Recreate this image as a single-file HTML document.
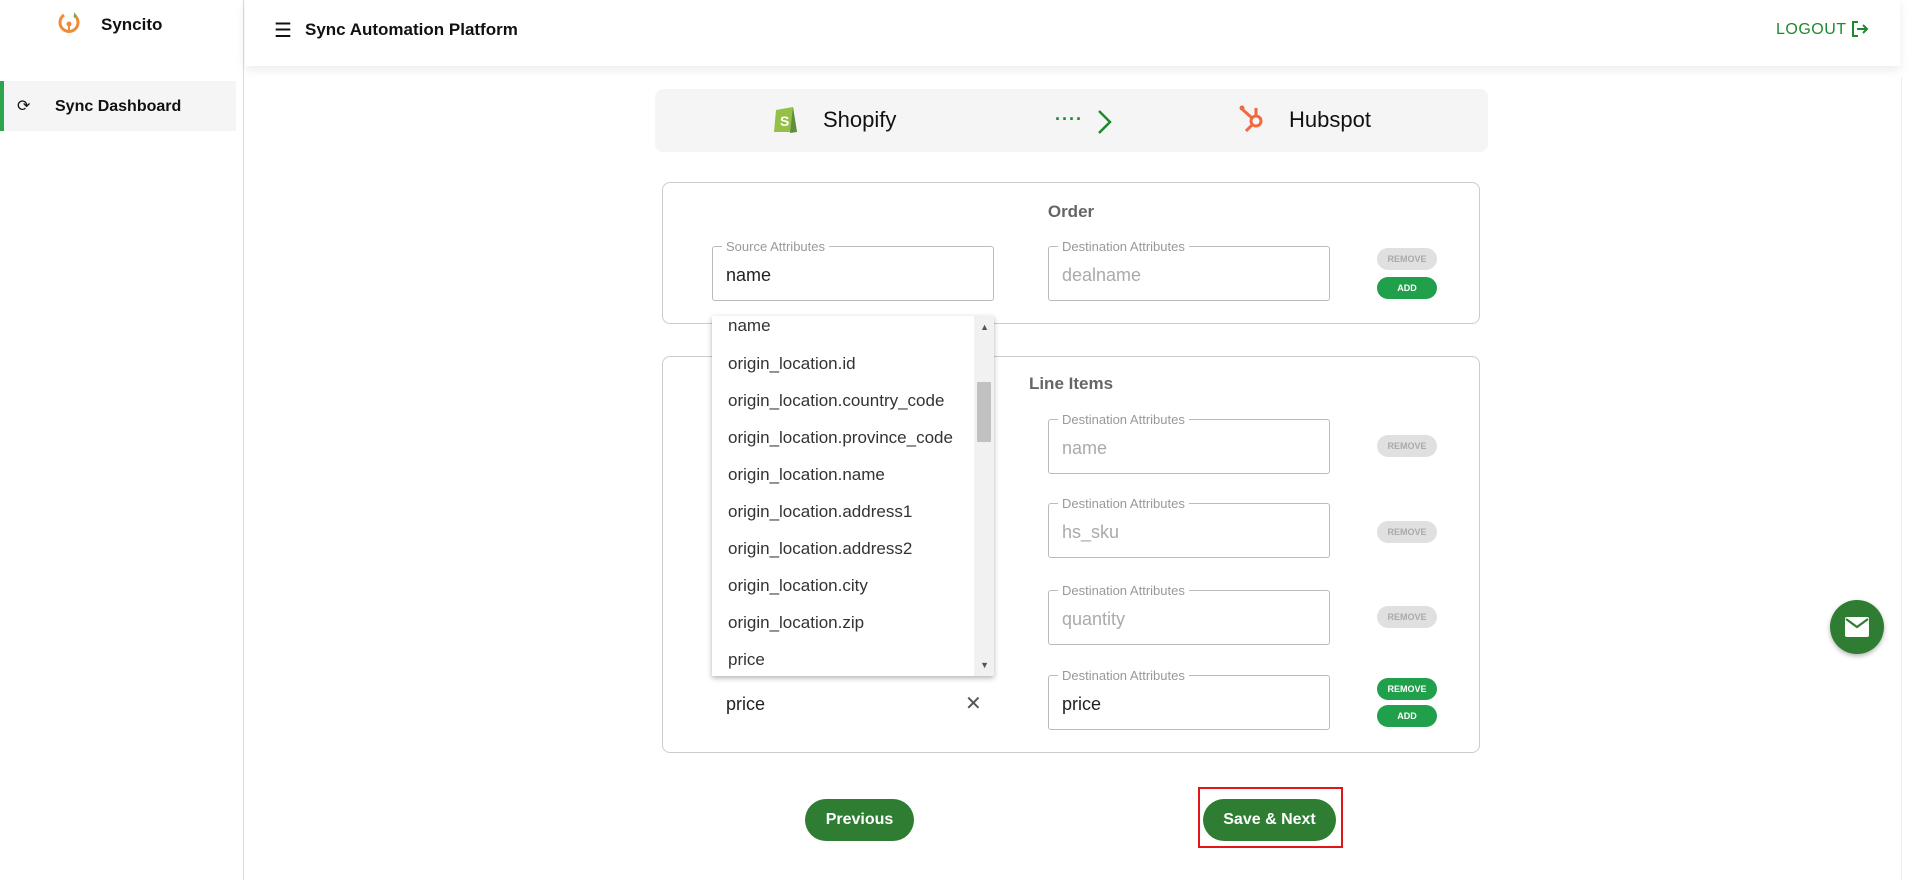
<!DOCTYPE html>
<html><head><meta charset="utf-8"><style>
*{box-sizing:border-box;margin:0;padding:0}
body{width:1916px;height:880px;overflow:hidden;background:#fff;font-family:"Liberation Sans",sans-serif;position:relative;color:#111}
.abs{position:absolute}
.side{left:0;top:0;width:244px;height:880px;border-right:1px solid #ddd;background:#fff}
.hdr{left:245px;top:0;width:1655px;height:66px;background:#fff;box-shadow:0 4px 10px rgba(0,0,0,.08)}
.banner{left:655px;top:89px;width:833px;height:63px;background:#f5f5f5;border-radius:8px}
.card{border:1px solid #ccc;border-radius:8px;left:662px;width:818px}
.ttl{font-size:17px;font-weight:bold;color:#666;width:100%;text-align:center}
.fld{border:1px solid #bbb;border-radius:3px;height:55px;width:282px}
.fld .lb{position:absolute;top:-8px;left:9px;background:#fff;padding:0 4px;font-size:13px;color:#999}
.fld .v{position:absolute;left:13px;top:18px;font-size:18px;color:#aaa}
.fld .v.d{color:#222}
.pill{width:60px;height:22px;border-radius:11px;font-size:9px;font-weight:bold;text-align:center;line-height:22px;color:#fff;background:#20a04a}
.pill.off{background:#e0e0e0;color:#aaa}
.dd{left:712px;top:316px;width:282px;height:360px;background:#fff;box-shadow:0 2px 5px rgba(0,0,0,.3);overflow:hidden}
.dd div.i{position:absolute;left:16px;font-size:17px;color:#333}
.btn{height:42px;border-radius:21px;background:#2e7d32;color:#fff;font-size:16px;font-weight:bold;text-align:center;line-height:42px}
</style></head><body>
<div class="abs side">
  <svg class="abs" style="left:56px;top:10px" width="26" height="26" viewBox="0 0 26 26"><path d="M8 5 A9 9 0 1 0 18 5" fill="none" stroke="#ef8c3a" stroke-width="3"/><circle cx="13" cy="14" r="2.5" fill="#ef8c3a"/><rect x="12" y="14" width="2" height="6" fill="#ef8c3a"/><path d="M18 2 L21 6 L18 8z" fill="#6ab04c"/></svg>
  <div class="abs" style="left:101px;top:15px;font-size:17px;font-weight:bold">Syncito</div>
  <div class="abs" style="left:0;top:81px;width:236px;height:50px;background:#f5f5f5;border-left:4px solid #2ea44f"></div>
  <div class="abs" style="left:17px;top:96px;font-size:16px">⟳</div>
  <div class="abs" style="left:55px;top:98px;font-size:16px;font-weight:bold">Sync Dashboard</div>
</div>
<div class="abs hdr">
  <div class="abs" style="left:29px;top:18px;font-size:20px">☰</div>
  <div class="abs" style="left:60px;top:20px;font-size:17px;font-weight:bold">Sync Automation Platform</div>
  <div class="abs" style="left:1531px;top:21px;font-size:16px;color:#1e8a2e;letter-spacing:.5px">LOGOUT</div>
  <svg class="abs" style="left:1605px;top:19px" width="20" height="20" viewBox="0 0 20 20"><path d="M8 3H3v14h5M7 10h10M13 6l4 4-4 4" fill="none" stroke="#1e8a2e" stroke-width="2"/></svg>
</div>
<div class="abs" style="left:1901px;top:77px;width:1px;height:803px;background:#eee"></div>
<div class="abs banner">
  <svg class="abs" style="left:118px;top:13px" width="26" height="32" viewBox="0 0 26 32"><path d="M3 8 L20 5 L24 30 L1 30z" fill="#95bf47"/><path d="M20 5 L24 30 L17 31z" fill="#5e8e3e"/><text x="7" y="24" font-size="14" font-weight="bold" fill="#fff" font-family="Liberation Sans">S</text></svg>
  <div class="abs" style="left:168px;top:18px;font-size:22px">Shopify</div>
  <div class="abs" style="left:400px;top:20px;font-size:18px;color:#1e8a2e;letter-spacing:1px;font-weight:bold">····</div>
  <svg class="abs" style="left:442px;top:20px" width="16" height="26" viewBox="0 0 16 26"><path d="M2 2 L13 13 L2 24" fill="none" stroke="#1e8a2e" stroke-width="2.5"/></svg>
  <svg class="abs" style="left:583px;top:14px" width="28" height="30" viewBox="0 0 28 30"><circle cx="18" cy="18" r="5" fill="none" stroke="#f06a3f" stroke-width="3"/><path d="M18 13V5M14 15L4 6M15 21L8 28" stroke="#f06a3f" stroke-width="3"/><circle cx="4" cy="5" r="2.5" fill="#f06a3f"/></svg>
  <div class="abs" style="left:634px;top:18px;font-size:22px">Hubspot</div>
</div>
<div class="abs card" style="top:182px;height:142px">
  <div class="abs ttl" style="top:19px">Order</div>
</div>
<div class="abs fld" style="left:712px;top:246px"><span class="lb">Source Attributes</span><span class="v d">name</span></div>
<div class="abs fld" style="left:1048px;top:246px"><span class="lb">Destination Attributes</span><span class="v">dealname</span></div>
<div class="abs pill off" style="left:1377px;top:248px">REMOVE</div>
<div class="abs pill" style="left:1377px;top:277px">ADD</div>

<div class="abs card" style="top:356px;height:397px">
  <div class="abs ttl" style="top:17px">Line Items</div>
</div>
<div class="abs fld" style="left:712px;top:419px"></div>
<div class="abs fld" style="left:712px;top:503px"></div>
<div class="abs fld" style="left:712px;top:590px"></div>
<div class="abs fld" style="left:1048px;top:419px"><span class="lb">Destination Attributes</span><span class="v">name</span></div>
<div class="abs fld" style="left:1048px;top:503px"><span class="lb">Destination Attributes</span><span class="v">hs_sku</span></div>
<div class="abs fld" style="left:1048px;top:590px"><span class="lb">Destination Attributes</span><span class="v">quantity</span></div>
<div class="abs fld" style="left:1048px;top:675px"><span class="lb">Destination Attributes</span><span class="v d">price</span></div>
<div class="abs pill off" style="left:1377px;top:435px">REMOVE</div>
<div class="abs pill off" style="left:1377px;top:521px">REMOVE</div>
<div class="abs pill off" style="left:1377px;top:606px">REMOVE</div>
<div class="abs pill" style="left:1377px;top:678px">REMOVE</div>
<div class="abs pill" style="left:1377px;top:705px">ADD</div>
<div class="abs" style="left:726px;top:694px;font-size:18px;color:#222">price</div>
<div class="abs" style="left:965px;top:691px;font-size:20px;color:#555">✕</div>

<div class="abs dd">
  <div class="i" style="top:0">name</div>
  <div class="i" style="top:38px">origin_location.id</div>
  <div class="i" style="top:75px">origin_location.country_code</div>
  <div class="i" style="top:112px">origin_location.province_code</div>
  <div class="i" style="top:149px">origin_location.name</div>
  <div class="i" style="top:186px">origin_location.address1</div>
  <div class="i" style="top:223px">origin_location.address2</div>
  <div class="i" style="top:260px">origin_location.city</div>
  <div class="i" style="top:297px">origin_location.zip</div>
  <div class="i" style="top:334px">price</div>
  <div class="abs" style="right:0;top:0;width:20px;height:360px;background:#f1f1f1"></div>
  <div class="abs" style="right:3px;top:66px;width:14px;height:60px;background:#c1c1c1"></div>
  <div class="abs" style="right:5px;top:6px;font-size:9px;color:#555">▲</div>
  <div class="abs" style="right:5px;top:344px;font-size:9px;color:#555">▼</div>
</div>

<div class="abs btn" style="left:805px;top:799px;width:109px">Previous</div>
<div class="abs" style="left:1198px;top:787px;width:145px;height:61px;border:2px solid #e0161b"></div>
<div class="abs btn" style="left:1203px;top:799px;width:133px">Save &amp; Next</div>

<div class="abs" style="left:1830px;top:600px;width:54px;height:54px;border-radius:50%;background:#2e7d32;box-shadow:0 2px 5px rgba(0,0,0,.3)"></div>
<svg class="abs" style="left:1844px;top:616px" width="26" height="22" viewBox="0 0 26 22"><rect x="1" y="1" width="24" height="20" rx="2" fill="#fff"/><path d="M2 3 L13 11 L24 3" fill="none" stroke="#2e7d32" stroke-width="2.2"/></svg>
</body></html>
